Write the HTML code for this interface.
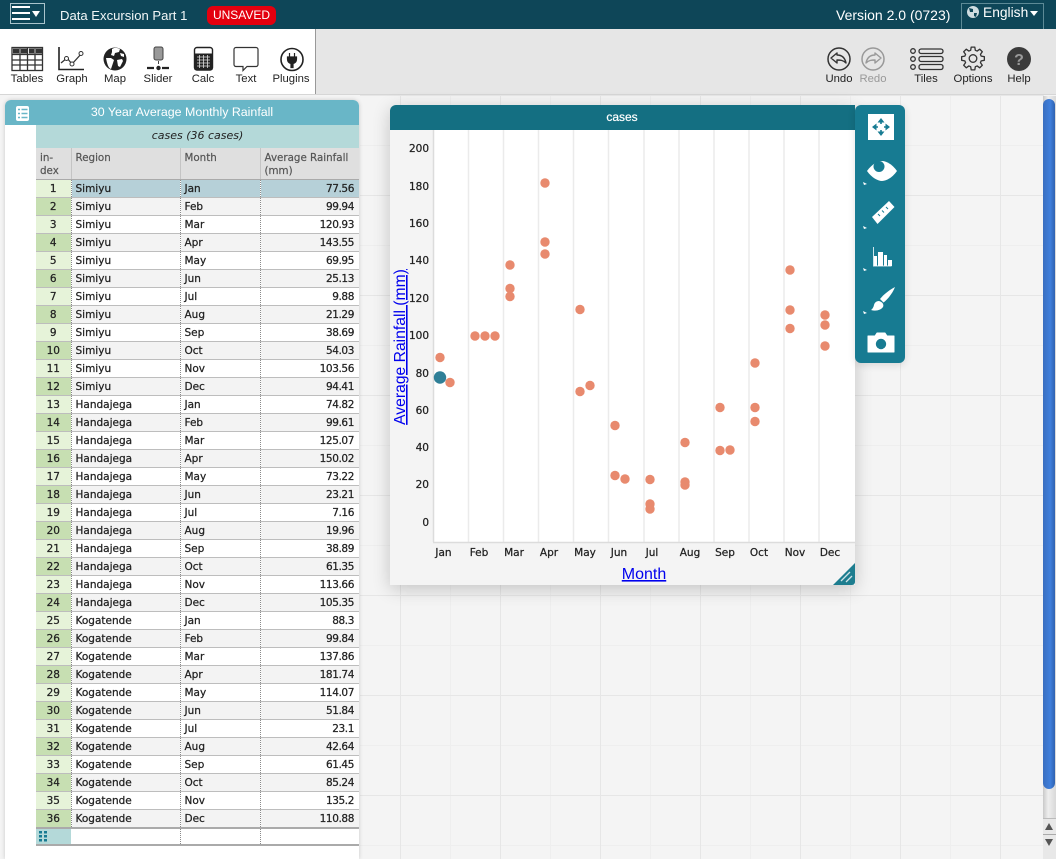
<!DOCTYPE html>
<html><head><meta charset="utf-8"><title>Data Excursion Part 1</title>
<style>
html,body{margin:0;padding:0;width:1056px;height:859px;overflow:hidden;background:#f4f4f4;font-family:"Liberation Sans",sans-serif;color:#222}
.a{position:absolute}
#top{left:0;top:0;width:1056px;height:29px;background:#0e4658;color:#fff}
#bar{left:0;top:29px;width:1056px;height:66px;background:#e6e6e6;border-bottom:1px solid #d6d6d6;box-sizing:border-box}
#wh{left:0;top:29px;width:315px;height:65px;background:#fff;border-right:1px solid #999}
.l{position:absolute;top:73px;font-size:11.3px;text-align:center;width:60px;color:#222;line-height:13px}
#grid{left:360px;top:95px;width:684px;height:764px;background-color:#f4f4f4;background-image:linear-gradient(#e6e6e6 1px,transparent 1px),linear-gradient(90deg,#e6e6e6 1px,transparent 1px),linear-gradient(#eeeeee 1px,transparent 1px),linear-gradient(90deg,#eeeeee 1px,transparent 1px);background-size:100px 100px,100px 100px,50px 50px,50px 50px;background-position:0 0,40px 0,0 0,40px 0}
#tbl{left:5px;top:100px;width:354px;height:759px;background:#fff;border-radius:6px 6px 0 0;box-shadow:0 0 4px rgba(0,0,0,.18)}
#tt{left:0;top:0;width:354px;height:25px;background:#69b6c7;border-radius:6px 6px 0 0;color:#fff;font-size:12.4px;line-height:24px;text-align:center}
#ch{left:31px;top:25px;width:323px;height:23px;background:#b4d9d9;font:italic 11px/22px "DejaVu Sans",sans-serif;text-align:center;color:#222}
table{position:absolute;left:31px;top:48px;border-collapse:collapse;table-layout:fixed;width:323px;font:10.5px "DejaVu Sans",sans-serif;color:#222;-webkit-text-stroke:.25px #222}
td,th{padding:2px 4px 0 4px;height:17px;line-height:13px;border-bottom:1px solid #bdbdbd;border-right:1px dotted #8a8a8a;overflow:hidden;white-space:nowrap;box-sizing:border-box}
tr{height:18px}
th{background:#dfdfdf;font-weight:normal;text-align:left;vertical-align:top;white-space:normal;color:#555;-webkit-text-stroke:.2px #555;padding:4px 4px 0 4px;border-right:1px solid #c4c4c4;border-bottom:1px solid #aaa;font-size:10.3px}
td:first-child{text-align:center;background:#e6f3d9;padding-left:4px}
tr:nth-child(odd) td{background-color:#f3f3f3}
tr:nth-child(odd) td:first-child{background-color:#c7dfb2}
td:nth-child(3){padding-left:4px}
td:last-child{text-align:right;border-right:0;letter-spacing:-.4px;padding-right:5px}
th:last-child{border-right:0}
tr.s td{background:#b6d0d8}
tr.s td:first-child{background:#e6f3d9}
#chart{left:390px;top:105px;width:465px;height:480px;background:#f4f4f4;border-radius:6px 6px 0 0;box-shadow:0 4px 18px rgba(0,0,0,.2)}
#pal{left:855px;top:105px;width:50px;height:258px;background:#177b92;border-radius:6px;box-shadow:0 2px 8px rgba(0,0,0,.12)}
#sb{left:1043px;top:96px;width:13px;height:763px;background:linear-gradient(90deg,#c9c9c9,#eee 40%,#d8d8d8)}
#th{left:1043px;top:99px;width:12px;height:690px;background:linear-gradient(90deg,#3a6fc0,#3f7fdc 60%,#2f62b0);border-radius:6px}
</style></head><body>
<div class="a" id="grid"></div>
<div class="a" id="top">
<div class="a" style="left:10px;top:3px;width:33px;height:19px;border:1px solid #a9c4cc"></div>
<div class="a" style="left:12px;top:6px;width:18px;height:2px;background:#fff;box-shadow:0 6px #fff,0 12px #fff"></div>
<div class="a" style="left:32px;top:11px;width:0;height:0;border:4px solid transparent;border-top:6px solid #fff;border-bottom:0"></div>
<div class="a" style="left:60px;top:8px;font-size:13.1px;line-height:16px;white-space:nowrap;color:#f1f6f7">Data Excursion Part 1</div>
<div class="a" style="left:207px;top:6px;width:69px;height:19px;background:#e3000f;border-radius:6px;font-size:12px;line-height:19px;text-align:center;color:#fff">UNSAVED</div>
<div class="a" style="left:836px;top:7px;font-size:14px;line-height:17px;white-space:nowrap">Version 2.0 (0723)</div>
<div class="a" style="left:961px;top:3px;width:83px;height:26px;border:1px solid #5d8a96;border-bottom:0;box-sizing:border-box"></div>
<svg class="a" style="left:966px;top:5px" width="14" height="14" viewBox="0 0 14 14"><circle cx="7" cy="7" r="6" fill="#cfdde1"/><path d="M3 3l4 1 0 3-3 0zM8 8l3 0-1 4-2-1z" fill="#0e4658"/></svg>
<div class="a" style="left:983px;top:4px;font-size:13.8px;line-height:17px;white-space:nowrap">English</div>
<div class="a" style="left:1030px;top:11px;width:0;height:0;border:4px solid transparent;border-top:5px solid #fff;border-bottom:0"></div>
</div>
<div class="a" id="bar"></div>
<div class="a" id="wh"></div>
<svg class="a" style="left:0;top:29px" width="320" height="45" viewBox="0 29 320 45">
<g fill="none" stroke="#333" stroke-width="1.3">
<rect x="12" y="47.5" width="30.5" height="23"/><path d="M12 54.5h30.5M12 60h30.5M12 65h30.5M20 47.5v23M27.5 47.5v23M35 47.5v23"/>
</g>
<path d="M13 48.500h6v5h-6zM21 48.500h6v5h-6zM29 48.500h5v5h-5zM36 48.500h6v5h-6z" fill="#333"/>
<path d="M59 47v22.5h25" fill="none" stroke="#222" stroke-width="1.6"/>
<path d="M61 63l6-5 5 6 10-11" fill="none" stroke="#333" stroke-width="1.3"/>
<circle cx="66.500" cy="58.500" r="2" fill="#fff" stroke="#333"/><circle cx="72" cy="64" r="2" fill="#fff" stroke="#333"/><circle cx="81" cy="53.500" r="2" fill="#fff" stroke="#333"/>
<circle cx="115" cy="59" r="11.500" fill="#222"/>
<path d="M112 49c3-2 6-1 8 0l-1 3-4 1-1 3-3-1 1-3zM106 58l5 0 3 2-1 3-2 6c-3-1-4-6-5-11zM117 60l5-1 1 2-3 6-2-1zM120 53l4 1 0 3-3-1z" fill="#fff"/>
<rect x="154" y="47" width="9" height="13" rx="2" fill="#999" stroke="#444"/>
<path d="M147 68h7M162 68h7" stroke="#222" stroke-width="2.2"/><circle cx="158.500" cy="68" r="2.200" fill="#222"/><path d="M158.500 61v3" stroke="#444"/>
<rect x="194.500" y="47.500" width="18" height="22.500" rx="2.500" fill="#fff" stroke="#222" stroke-width="1.400"/>
<rect x="194.500" y="53.500" width="18" height="16.500" fill="#222"/>
<path d="M197 57h13M197 60h13M197 63h13M197 66h13M199.500 55v13M203.500 55v13M207.500 55v13" stroke="#ddd" stroke-width=".8"/>
<path d="M236 47.500h20a2 2 0 0 1 2 2v15a2 2 0 0 1-2 2h-9l-4 4v-4h-7a2 2 0 0 1-2-2v-15a2 2 0 0 1 2-2z" fill="#fff" stroke="#333" stroke-width="1.200"/>
<circle cx="292" cy="59.500" r="11" fill="#fff" stroke="#222" stroke-width="1.600"/>
<path d="M289.500 53v4M294.500 53v4M287.500 57h9v2c0 2.500-1.500 4-3.500 4.500v4h-2v-4c-2-.5-3.500-2-3.500-4.500z" fill="#222" stroke="#222" stroke-width="1.200"/>
</svg>
<div class="l" style="left:-3px">Tables</div><div class="l" style="left:42px">Graph</div><div class="l" style="left:85px">Map</div><div class="l" style="left:128px">Slider</div><div class="l" style="left:173px">Calc</div><div class="l" style="left:216px">Text</div><div class="l" style="left:261px">Plugins</div>
<svg class="a" style="left:820px;top:44px" width="220" height="30" viewBox="820 44 220 30">
<circle cx="839" cy="59" r="11" fill="none" stroke="#333" stroke-width="1.500"/>
<path d="M837 53l-6 5 6 5v-3c3 0 6 0 9 3-1-5-4-8-9-8z" fill="none" stroke="#333" stroke-width="1.400" stroke-linejoin="round"/>
<circle cx="873" cy="59" r="11" fill="none" stroke="#999" stroke-width="1.500"/>
<path d="M875 53l6 5-6 5v-3c-3 0-6 0-9 3 1-5 4-8 9-8z" fill="none" stroke="#999" stroke-width="1.400" stroke-linejoin="round"/>
<g fill="none" stroke="#333" stroke-width="1.300"><circle cx="913" cy="51" r="2.300"/><circle cx="913" cy="59" r="2.300"/><circle cx="913" cy="67" r="2.300"/>
<rect x="919" y="49" width="24" height="4.500" rx="2.200"/><rect x="919" y="56.500" width="24" height="5" rx="2.200"/><rect x="919" y="64.500" width="24" height="5" rx="2.200"/></g>
<g fill="none" stroke="#333" stroke-width="1.300" transform="translate(973 58.500)"><circle r="3.800"/>
<path stroke-linejoin="round" d="M8.170-2.340L11.360-1.800L11.360 1.800L8.170 2.340L7.430 4.120L9.300 6.760L6.760 9.300L4.120 7.430L2.340 8.170L1.800 11.360L-1.800 11.360L-2.340 8.170L-4.120 7.430L-6.760 9.300L-9.300 6.760L-7.430 4.120L-8.170 2.340L-11.360 1.800L-11.360-1.800L-8.170-2.340L-7.430-4.120L-9.300-6.760L-6.760-9.300L-4.120-7.430L-2.340-8.170L-1.800-11.360L1.800-11.360L2.340-8.170L4.120-7.430L6.760-9.300L9.300-6.760L7.430-4.120z"/></g>
<circle cx="1019" cy="59" r="12" fill="#3b3b3b"/>
<text x="1019" y="65" font-family="Liberation Sans" font-weight="bold" font-size="16" fill="#9a9a9a" text-anchor="middle">?</text>
</svg>
<div class="l" style="left:809px">Undo</div><div class="l" style="left:843px;color:#999">Redo</div><div class="l" style="left:896px">Tiles</div><div class="l" style="left:943px">Options</div><div class="l" style="left:989px">Help</div>

<div class="a" id="tbl">
<div class="a" id="tt">30 Year Average Monthly Rainfall</div>
<svg class="a" style="left:11px;top:6px" width="13" height="15" viewBox="0 0 13 15"><rect width="13" height="15" rx="2" fill="#fff"/><path d="M2 3.500h2M2 7.500h2M2 11.500h2M5.500 3.500h6M5.500 7.500h6M5.500 11.500h6" stroke="#69b6c7" stroke-width="1.500"/></svg>
<div class="a" id="ch">cases (36 cases)</div>
<table><colgroup><col style="width:35px"><col style="width:109px"><col style="width:80px"><col style="width:99px"></colgroup>
<tr style="height:31px"><th style="line-height:13px">in-<br>dex</th><th>Region</th><th>Month</th><th style="line-height:13px">Average Rainfall (mm)</th></tr>
<tr class="s"><td>1</td><td>Simiyu</td><td>Jan</td><td>77.56</td></tr>
<tr><td>2</td><td>Simiyu</td><td>Feb</td><td>99.94</td></tr>
<tr><td>3</td><td>Simiyu</td><td>Mar</td><td>120.93</td></tr>
<tr><td>4</td><td>Simiyu</td><td>Apr</td><td>143.55</td></tr>
<tr><td>5</td><td>Simiyu</td><td>May</td><td>69.95</td></tr>
<tr><td>6</td><td>Simiyu</td><td>Jun</td><td>25.13</td></tr>
<tr><td>7</td><td>Simiyu</td><td>Jul</td><td>9.88</td></tr>
<tr><td>8</td><td>Simiyu</td><td>Aug</td><td>21.29</td></tr>
<tr><td>9</td><td>Simiyu</td><td>Sep</td><td>38.69</td></tr>
<tr><td>10</td><td>Simiyu</td><td>Oct</td><td>54.03</td></tr>
<tr><td>11</td><td>Simiyu</td><td>Nov</td><td>103.56</td></tr>
<tr><td>12</td><td>Simiyu</td><td>Dec</td><td>94.41</td></tr>
<tr><td>13</td><td>Handajega</td><td>Jan</td><td>74.82</td></tr>
<tr><td>14</td><td>Handajega</td><td>Feb</td><td>99.61</td></tr>
<tr><td>15</td><td>Handajega</td><td>Mar</td><td>125.07</td></tr>
<tr><td>16</td><td>Handajega</td><td>Apr</td><td>150.02</td></tr>
<tr><td>17</td><td>Handajega</td><td>May</td><td>73.22</td></tr>
<tr><td>18</td><td>Handajega</td><td>Jun</td><td>23.21</td></tr>
<tr><td>19</td><td>Handajega</td><td>Jul</td><td>7.16</td></tr>
<tr><td>20</td><td>Handajega</td><td>Aug</td><td>19.96</td></tr>
<tr><td>21</td><td>Handajega</td><td>Sep</td><td>38.89</td></tr>
<tr><td>22</td><td>Handajega</td><td>Oct</td><td>61.35</td></tr>
<tr><td>23</td><td>Handajega</td><td>Nov</td><td>113.66</td></tr>
<tr><td>24</td><td>Handajega</td><td>Dec</td><td>105.35</td></tr>
<tr><td>25</td><td>Kogatende</td><td>Jan</td><td>88.3</td></tr>
<tr><td>26</td><td>Kogatende</td><td>Feb</td><td>99.84</td></tr>
<tr><td>27</td><td>Kogatende</td><td>Mar</td><td>137.86</td></tr>
<tr><td>28</td><td>Kogatende</td><td>Apr</td><td>181.74</td></tr>
<tr><td>29</td><td>Kogatende</td><td>May</td><td>114.07</td></tr>
<tr><td>30</td><td>Kogatende</td><td>Jun</td><td>51.84</td></tr>
<tr><td>31</td><td>Kogatende</td><td>Jul</td><td>23.1</td></tr>
<tr><td>32</td><td>Kogatende</td><td>Aug</td><td>42.64</td></tr>
<tr><td>33</td><td>Kogatende</td><td>Sep</td><td>61.45</td></tr>
<tr><td>34</td><td>Kogatende</td><td>Oct</td><td>85.24</td></tr>
<tr><td>35</td><td>Kogatende</td><td>Nov</td><td>135.2</td></tr>
<tr><td>36</td><td>Kogatende</td><td>Dec</td><td>110.88</td></tr>
</table>
<div class="a" style="left:31px;top:727px;width:323px;height:2px;background:#aaa"></div>
<div class="a" style="left:31px;top:729px;width:35px;height:15px;background:#b4d9d9"></div>
<div class="a" style="left:31px;top:744px;width:323px;height:2px;background:#aaa"></div>
<div class="a" style="left:175px;top:729px;height:15px;border-left:1px dotted #8a8a8a"></div>
<div class="a" style="left:255px;top:729px;height:15px;border-left:1px dotted #8a8a8a"></div>
<svg class="a" style="left:34px;top:730px" width="9" height="12"><path d="M0 1h3v2.500h-3zM5 1h3v2.500h-3zM0 5h3v2.500h-3zM5 5h3v2.500h-3zM0 9h3v2.500h-3zM5 9h3v2.500h-3z" fill="#177b92"/></svg>
</div>

<div class="a" id="chart"></div>
<svg class="a" style="left:390px;top:105px" width="465" height="480" viewBox="390 105 465 480">
<path d="M390 130v-19a6 6 0 0 1 6-6h459v25z" fill="#146f82"/>
<text x="622" y="121" font-family="Liberation Sans" font-size="12" fill="#fff" stroke="#fff" stroke-width=".2" text-anchor="middle">cases</text>
<rect x="433" y="130" width="422" height="412" fill="#fff"/>
<path d="M468.500 130v412M503.500 130v412M538.500 130v412M573.500 130v412M608.500 130v412M644 130v412M679 130v412M714 130v412M749 130v412M784 130v412M819 130v412" stroke="#ebebeb" stroke-width="1.500"/>
<path d="M433.500 130v412M433 542.500h422" stroke="#dcdcdc" stroke-width="1.500"/>
<g font-family="DejaVu Sans" font-size="10.500" fill="#222" stroke="#222" stroke-width=".25" text-anchor="end">
<text x="429" y="152">200</text><text x="429" y="190">180</text><text x="429" y="227">160</text><text x="429" y="264">140</text><text x="429" y="302">120</text><text x="429" y="339">100</text><text x="429" y="377">80</text><text x="429" y="414">60</text><text x="429" y="451">40</text><text x="429" y="488">20</text><text x="429" y="526">0</text>
</g>
<g font-family="DejaVu Sans" font-size="10.500" fill="#222" stroke="#222" stroke-width=".25" text-anchor="middle">
<text x="443.500" y="556">Jan</text><text x="479" y="556">Feb</text><text x="514" y="556">Mar</text><text x="549" y="556">Apr</text><text x="585" y="556">May</text><text x="619" y="556">Jun</text><text x="652" y="556">Jul</text><text x="690" y="556">Aug</text><text x="725" y="556">Sep</text><text x="759" y="556">Oct</text><text x="795" y="556">Nov</text><text x="830" y="556">Dec</text>
</g>
<g fill="#e88a6e">
<circle cx="450" cy="382.500" r="4.700"/><circle cx="440" cy="357.500" r="4.700"/>
<circle cx="475" cy="336" r="4.700"/><circle cx="485" cy="336" r="4.700"/><circle cx="495" cy="336" r="4.700"/>
<circle cx="510" cy="296.500" r="4.700"/><circle cx="510" cy="288.500" r="4.700"/><circle cx="510" cy="265" r="4.700"/>
<circle cx="545" cy="254" r="4.700"/><circle cx="545" cy="242" r="4.700"/><circle cx="545" cy="183" r="4.700"/>
<circle cx="580" cy="391.500" r="4.700"/><circle cx="590" cy="385.500" r="4.700"/><circle cx="580" cy="309.500" r="4.700"/>
<circle cx="615" cy="475.500" r="4.700"/><circle cx="625" cy="479" r="4.700"/><circle cx="615" cy="425.500" r="4.700"/>
<circle cx="650" cy="504" r="4.700"/><circle cx="650" cy="509" r="4.700"/><circle cx="650" cy="479.500" r="4.700"/>
<circle cx="685" cy="482" r="4.700"/><circle cx="685" cy="485" r="4.700"/><circle cx="685" cy="442.500" r="4.700"/>
<circle cx="720" cy="450.500" r="4.700"/><circle cx="730" cy="450" r="4.700"/><circle cx="720" cy="407.500" r="4.700"/>
<circle cx="755" cy="421.500" r="4.700"/><circle cx="755" cy="407.500" r="4.700"/><circle cx="755" cy="363" r="4.700"/>
<circle cx="790" cy="328.500" r="4.700"/><circle cx="790" cy="310" r="4.700"/><circle cx="790" cy="270" r="4.700"/>
<circle cx="825" cy="346" r="4.700"/><circle cx="825" cy="325" r="4.700"/><circle cx="825" cy="315" r="4.700"/>
</g>
<circle cx="440" cy="377.500" r="6.200" fill="#2f7f97"/>
<text transform="translate(405 347) rotate(-90)" font-family="Liberation Sans" font-size="15.700" fill="#0000ee" text-anchor="middle" text-decoration="underline">Average Rainfall (mm)</text>
<text x="644" y="579" font-family="Liberation Sans" font-size="16" fill="#0000ee" text-anchor="middle" text-decoration="underline">Month</text>
<path d="M833 585l22-22v19a3 3 0 0 1-3 3z" fill="#1d7d8f"/>
<path d="M841 581l9-9M846 582l6-6" stroke="#cfe3e7" stroke-width="1.300"/>
</svg>

<div class="a" id="pal"></div>
<svg class="a" style="left:855px;top:105px" width="50" height="258" viewBox="855 105 50 258">
<rect x="868" y="114" width="26" height="26" fill="#fff"/>
<g fill="#177b92"><path d="M881 118l3.500 4.500h-7zM881 136l3.500-4.500h-7zM872 127l4.500-3.500v7zM890 127l-4.500-3.500v7z"/></g>
<path d="M881 121v3M881 130v3M875 127h3M884 127h3" stroke="#177b92" stroke-width="1.600"/>
<path d="M866 171c5-7 11-10 15-10s10 3 15 10c-5 7-11 10-15 10s-10-3-15-10z" fill="#fff" transform="translate(1 0)"/>
<circle cx="879" cy="166.500" r="5.500" fill="#177b92"/>
<path d="M872 217l17-16 5.500 6-17 17z" fill="#fff"/>
<path d="M878 214l2 2M882 210.500l2 2M886 207l2 2" stroke="#177b92" stroke-width="1"/>
<path d="M873.500 247v19h18" fill="none" stroke="#cfe6ec" stroke-width="1"/>
<path d="M874 256h3v10h-3zM878 252h5v14h-5zM884 255h3v11h-3zM888 260h4v6h-4z" fill="#fff"/>
<path d="M895 287c-6 3-12 8-15 12l3.500 3.500c4-3 9-9 11.500-15.500z" fill="#fff"/>
<path d="M879 301c-3 0-4.500 2-5 4-.4 2-1.500 4-3 5 5 1.500 10 0 12-3 1-2 0-5-4-6z" fill="#fff"/>
<path d="M868 336h7l2-3h8l2 3h7v16h-26z" fill="#fff" stroke="#fff" stroke-width="1" stroke-linejoin="round"/>
<circle cx="881" cy="344" r="5.200" fill="#177b92"/>
<path d="M863 182l4 2-3 1zM863 226l4 2-3 1zM863 268l4 2-3 1zM863 311l4 2-3 1z" fill="#fff"/>
</svg>

<div class="a" id="sb"></div>
<div class="a" id="th"></div>
<div class="a" style="left:1043px;top:818px;width:13px;height:41px;background:#e8e8e8;border-top:1px solid #bbb;box-sizing:border-box"></div>
<div class="a" style="left:1045px;top:823px;width:0;height:0;border:4px solid transparent;border-bottom:7px solid #555;border-top:0"></div>
<div class="a" style="left:1043px;top:834px;width:13px;height:1px;background:#aaa"></div>
<div class="a" style="left:1045px;top:839px;width:0;height:0;border:4px solid transparent;border-top:7px solid #555;border-bottom:0"></div>
</body></html>
